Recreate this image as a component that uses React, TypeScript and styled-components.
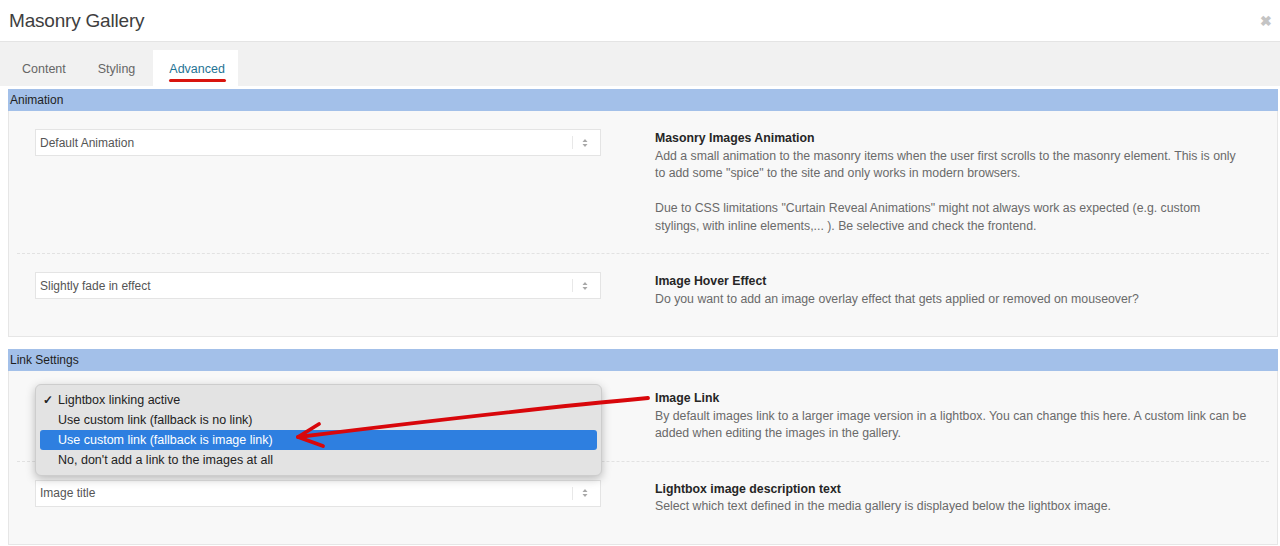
import React from 'react';
import styled, { createGlobalStyle } from 'styled-components';

const GlobalStyle = createGlobalStyle`
    html, body {
        margin: 0;
        padding: 0;
        background: #fff;
        font-family: 'Liberation Sans', Arial, sans-serif;
    }
`;

const Page = styled.div`
    position: relative;
    width: 1280px;
    height: 546px;
    overflow: hidden;
    background: #fff;
`;

const Header = styled.div`
    display: flex;
    align-items: center;
    justify-content: space-between;
    height: 41px;
    padding: 0 8px 0 9px;
    border-bottom: 1px solid #e4e4e4;
`;

const Title = styled.h1`
    margin: 0;
    font-size: 19px;
    font-weight: normal;
    color: #3e3e3e;
    letter-spacing: -0.2px;
`;

const Close = styled.span`
    font-size: 14px;
    font-weight: bold;
    color: #c4c4c4;
    line-height: 1;
    margin-top: 1px;
`;

const TabBar = styled.div`
    display: flex;
    align-items: flex-end;
    height: 44px;
    padding-left: 6px;
    background: #f1f1f1;
`;

const Tab = styled.div<{ active?: boolean }>`
    position: relative;
    height: 36px;
    padding: 2px ${p => (p.active ? '13px' : '16px')} 0 16px;
    margin-left: ${p => (p.active ? '2px' : '0')};
    display: flex;
    align-items: center;
    box-sizing: border-box;
    font-size: 12.5px;
    color: ${p => (p.active ? '#1f7394' : '#666')};
    background: ${p => (p.active ? '#fff' : 'transparent')};

    ${p =>
        p.active &&
        `
        &::after {
            content: '';
            position: absolute;
            left: 16px;
            right: 12px;
            bottom: 4px;
            height: 3px;
            border-radius: 2px;
            background: #d9140e;
        }
    `}
`;

const Content = styled.div`
    padding: 3px 2px 0 8px;
`;

const Section = styled.section`
    & + & {
        margin-top: 12px;
    }
`;

const SectionHead = styled.div`
    height: 22px;
    line-height: 23px;
    padding-left: 2px;
    font-size: 12px;
    color: #1e1e1e;
    background: #a3c0e9;
`;

const SectionBody = styled.div`
    background: #f8f8f8;
    border: 1px solid #e6e6e6;
    border-top: none;
    padding: 0 8px 10px;
`;

const Row = styled.div`
    display: flex;
    gap: 54px;
    padding: 18px 0 18px 18px;

    & + & {
        border-top: 1px dashed #e2e2e2;
    }
`;

const Field = styled.div`
    position: relative;
    width: 566px;
    flex-shrink: 0;
`;

const Select = styled.div`
    display: flex;
    align-items: center;
    height: 27px;
    box-sizing: border-box;
    border: 1px solid #e4e4e4;
    background: #fff;
    font-size: 12px;
    color: #555;
    padding-left: 4px;
`;

const SelectText = styled.span<{ hidden?: boolean }>`
    flex: 1;
    visibility: ${p => (p.hidden ? 'hidden' : 'visible')};
`;

const SelectArrows = styled.span`
    display: flex;
    align-items: center;
    height: 13px;
    padding: 0 12px 0 9px;
    border-left: 1px solid #e8e8e8;
`;

const Desc = styled.div`
    padding-top: 1px;
    width: 600px;
    font-size: 12.3px;
    line-height: 17.5px;
    color: #6a6a6a;
`;

const DescTitle = styled.div`
    font-weight: bold;
    color: #262626;
`;

const Para = styled.p`
    margin: 0;

    & + & {
        margin-top: 17.5px;
    }
`;

const Line = styled.span`
    display: block;
    white-space: nowrap;
`;

const Popup = styled.div`
    position: absolute;
    left: 0;
    top: -5px;
    width: 567px;
    box-sizing: border-box;
    padding: 5px 4px;
    background: #e3e3e3;
    border: 1px solid #cdcdcd;
    border-radius: 6px;
    box-shadow: 0 3px 10px rgba(0, 0, 0, 0.25);
    z-index: 2;
`;

const Option = styled.div<{ selected?: boolean }>`
    display: flex;
    height: 20px;
    line-height: 20px;
    font-size: 12.5px;
    border-radius: 3px;
    color: ${p => (p.selected ? '#fff' : '#222')};
    background: ${p => (p.selected ? '#2e7fe0' : 'transparent')};
`;

const Check = styled.span`
    width: 18px;
    padding-left: 3px;
    box-sizing: border-box;
    font-size: 12px;
    font-weight: bold;
`;

const Overlay = styled.svg`
    position: absolute;
    left: 0;
    top: 0;
    pointer-events: none;
    z-index: 5;
`;

const UpDown = () => (
    <svg width="6" height="10" viewBox="0 0 6 10">
        <path d="M0.5 4 L3 1 L5.5 4 Z" fill="#a8a8a8" />
        <path d="M0.5 6 L3 9 L5.5 6 Z" fill="#a8a8a8" />
    </svg>
);

interface SelectProps {
    value: string;
    open?: boolean;
}

const SelectBox = ({ value, open }: SelectProps) => (
    <Select>
        <SelectText hidden={open}>{value}</SelectText>
        <SelectArrows>
            <UpDown />
        </SelectArrows>
    </Select>
);

interface OptionRowProps {
    title: string;
    // each paragraph is a list of its wrapped lines
    text: string[][];
    value: string;
    menu?: { label: string; checked?: boolean; selected?: boolean }[];
}

const SettingRow = ({ title, text, value, menu }: OptionRowProps) => (
    <Row>
        <Field>
            <SelectBox value={value} open={!!menu} />
            {menu && (
                <Popup>
                    {menu.map(m => (
                        <Option key={m.label} selected={m.selected}>
                            <Check>{m.checked ? '✓' : ''}</Check>
                            {m.label}
                        </Option>
                    ))}
                </Popup>
            )}
        </Field>
        <Desc>
            <DescTitle>{title}</DescTitle>
            {text.map((lines, i) => (
                <Para key={i}>
                    {lines.map(l => (
                        <Line key={l}>{l}</Line>
                    ))}
                </Para>
            ))}
        </Desc>
    </Row>
);

const linkMenu = [
    { label: 'Lightbox linking active', checked: true },
    { label: 'Use custom link (fallback is no link)' },
    { label: 'Use custom link (fallback is image link)', selected: true },
    { label: "No, don't add a link to the images at all" },
];

const App = () => (
    <Page>
        <GlobalStyle />
        <Header>
            <Title>Masonry Gallery</Title>
            <Close>✖</Close>
        </Header>
        <TabBar>
            <Tab>Content</Tab>
            <Tab>Styling</Tab>
            <Tab active>Advanced</Tab>
        </TabBar>
        <Content>
            <Section>
                <SectionHead>Animation</SectionHead>
                <SectionBody>
                    <SettingRow
                        value="Default Animation"
                        title="Masonry Images Animation"
                        text={[
                            [
                                'Add a small animation to the masonry items when the user first scrolls to the masonry element. This is only',
                                'to add some "spice" to the site and only works in modern browsers.',
                            ],
                            [
                                'Due to CSS limitations "Curtain Reveal Animations" might not always work as expected (e.g. custom',
                                'stylings, with inline elements,... ). Be selective and check the frontend.',
                            ],
                        ]}
                    />
                    <SettingRow
                        value="Slightly fade in effect"
                        title="Image Hover Effect"
                        text={[
                            ['Do you want to add an image overlay effect that gets applied or removed on mouseover?'],
                        ]}
                    />
                </SectionBody>
            </Section>
            <Section>
                <SectionHead>Link Settings</SectionHead>
                <SectionBody>
                    <SettingRow
                        value="Lightbox linking active"
                        title="Image Link"
                        menu={linkMenu}
                        text={[
                            [
                                'By default images link to a larger image version in a lightbox. You can change this here. A custom link can be',
                                'added when editing the images in the gallery.',
                            ],
                        ]}
                    />
                    <SettingRow
                        value="Image title"
                        title="Lightbox image description text"
                        text={[
                            ['Select which text defined in the media gallery is displayed below the lightbox image.'],
                        ]}
                    />
                </SectionBody>
            </Section>
        </Content>
        {/* hand-drawn annotation arrow */}
        <Overlay width="1280" height="546" viewBox="0 0 1280 546">
            <g stroke="#d8070b" strokeWidth="3.8" strokeLinecap="round" strokeLinejoin="round" fill="none">
                <path d="M648 398 C560 406 420 422 298 437" />
                <path d="M319 424 L298 437 L323 446" />
            </g>
        </Overlay>
    </Page>
);

export default App;
